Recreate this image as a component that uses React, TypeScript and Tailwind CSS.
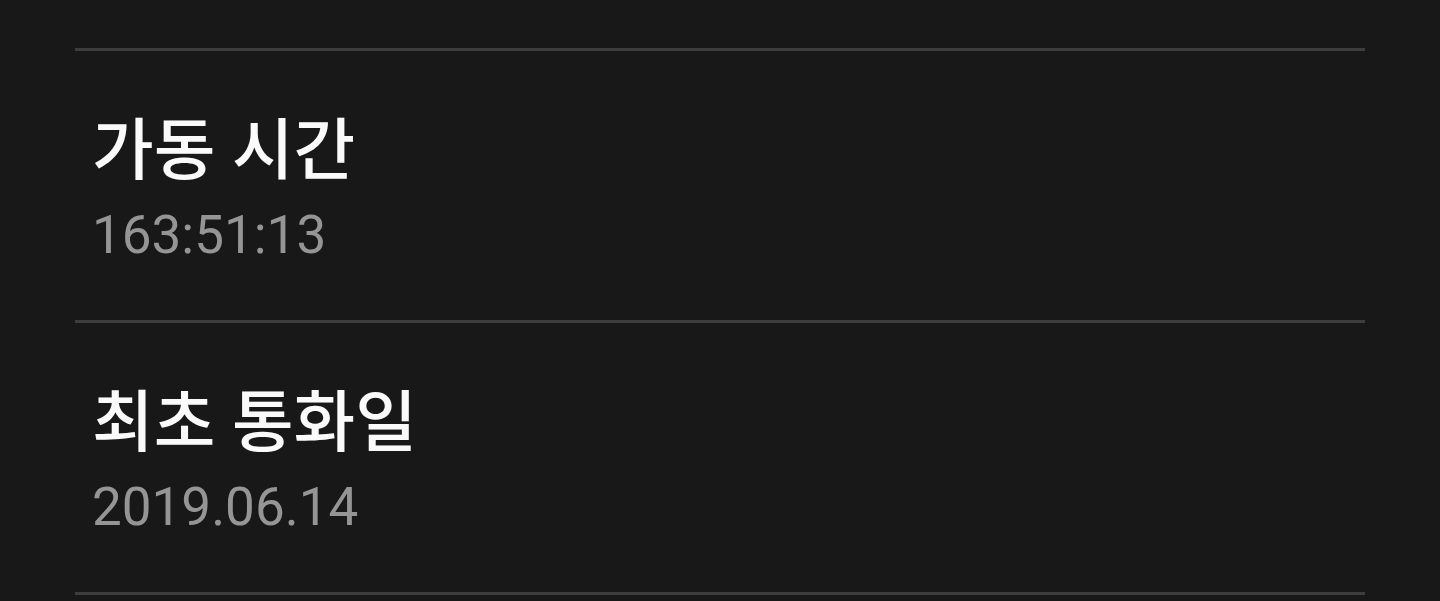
import React from 'react';

const rows = [
  { label: '가동 시간', value: '163:51:13' },
  { label: '최초 통화일', value: '2019.06.14' },
];

export default function App() {
  return (
    <div className="min-h-[601px] h-[601px] overflow-hidden bg-[#181818] px-[75px] pt-[48px]" style={{ fontFamily: 'Roboto, "Noto Sans CJK KR", sans-serif' }}>
      {rows.map((r) => (
        <div key={r.label} className="h-[272px] border-t-[3px] border-[#3d3d3d] pl-[17px] pt-[60px]">
          <div className="text-[67px] font-medium leading-[80px] text-[#fafafa]">{r.label}</div>
          <div className="mt-[14px] text-[53px] leading-[60px] text-[#959595]">{r.value}</div>
        </div>
      ))}
      <div className="border-t-[3px] border-[#3d3d3d]" />
    </div>
  );
}
